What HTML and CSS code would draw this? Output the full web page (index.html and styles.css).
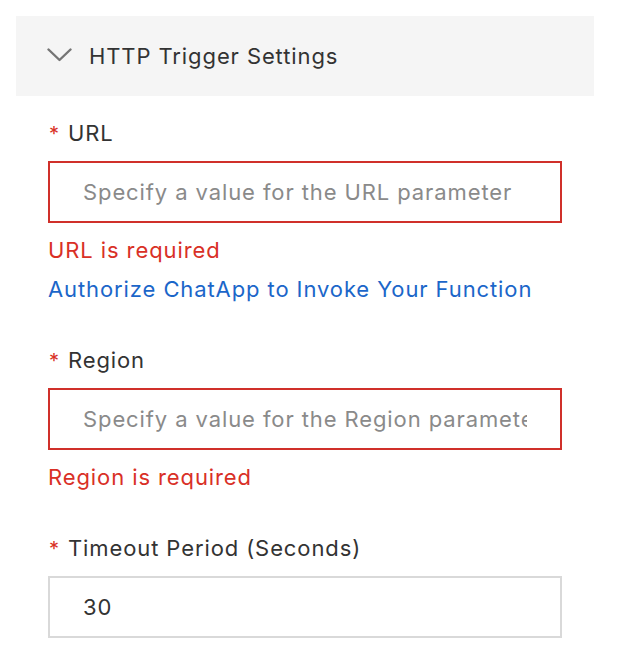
FILE: index.html
```html
<!DOCTYPE html>
<html>
<head>
<meta charset="utf-8">
<link rel="stylesheet" href="styles.css">
</head>
<body>
<div class="page">
  <div class="panel-header">
    <svg class="chevron" width="25" height="14" viewBox="0 0 25 14"><path d="M1.5 1.5 L12.5 12 L23.5 1.5" fill="none" stroke="#757575" stroke-width="2.4" stroke-linecap="round" stroke-linejoin="round"/></svg>
    <span class="panel-title">HTTP Trigger Settings</span>
  </div>
  <div class="panel-body">
    <div class="field">
      <div class="label"><span class="req">*</span>URL</div>
      <div class="input error-input"><span class="placeholder">Specify a value for the URL parameter</span></div>
      <div class="error">URL is required</div>
      <div class="link">Authorize ChatApp to Invoke Your Function</div>
    </div>
    <div class="field">
      <div class="label"><span class="req">*</span>Region</div>
      <div class="input error-input"><span class="placeholder">Specify a value for the Region parameter</span></div>
      <div class="error">Region is required</div>
    </div>
    <div class="field">
      <div class="label"><span class="req">*</span>Timeout Period (Seconds)</div>
      <div class="input"><span class="value">30</span></div>
    </div>
  </div>
</div>
</body>
</html>
```

FILE: styles.css
```css
html, body {
  margin: 0;
  padding: 0;
  background: #ffffff;
}
body {
  font-family: Inter, "Noto Sans", sans-serif;
  font-size: 22px;
  letter-spacing: 0.9px;
  color: #333333;
}
.page {
  padding: 16px 28px 0 16px;
}
.panel-header {
  height: 80px;
  background: #f5f5f5;
  display: flex;
  align-items: center;
  padding-left: 31px;
}
.chevron {
  display: block;
  margin-right: 17px;
  margin-top: -2px;
}
.panel-title {
  color: #333333;
  font-size: 22px;
}
.panel-body {
  padding: 22px 32px 0 32px;
}
.field {
  margin-bottom: 36px;
}
.label {
  line-height: 30px;
  height: 30px;
  display: flex;
  align-items: baseline;
}
.req {
  color: #d93026;
  font-size: 20px;
  margin-left: 1px;
  margin-right: 8px;
}
.input {
  margin-top: 13px;
  height: 62px;
  box-sizing: border-box;
  border: 2px solid #d9d9d9;
  display: flex;
  align-items: center;
  padding: 0 33px;
  white-space: nowrap;
}
.error-input {
  border-color: #d0302a;
}
.placeholder {
  color: #8a8a8a;
  flex: 1;
  min-width: 0;
  overflow: hidden;
}
.value {
  color: #333333;
}
.error {
  margin-top: 8px;
  line-height: 39px;
  color: #d93026;
}
.link {
  line-height: 39px;
  color: #1b66c9;
}
```
